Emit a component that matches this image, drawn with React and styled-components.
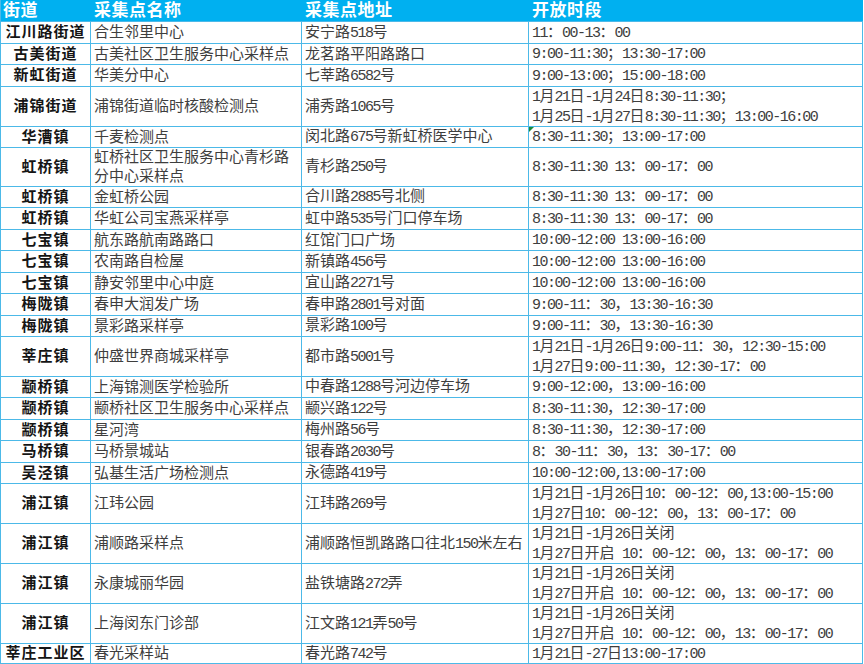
import React from "react";
import styled, { createGlobalStyle } from "styled-components";

const GlobalStyle = createGlobalStyle`
  html, body { margin: 0; padding: 0; background: #ffffff; }
  body { font-family: "Liberation Serif", "Noto Sans CJK SC", serif; }
`;

const LINE = "#4cb9e8";
const COLS = "90px 211px 227px 334px";

const Sheet = styled.div`
  display: flex;
  flex-direction: column;
  width: 863px;
  border-left: 1px solid ${LINE};
  box-sizing: border-box;
`;

const HeaderRow = styled.div`
  display: grid;
  grid-template-columns: ${COLS};
  height: 22px;
  background: #00b0f0;
  border-bottom: 1px solid ${LINE};
  box-sizing: border-box;
`;

const HeaderCell = styled.div`
  display: flex;
  align-items: center;
  padding-left: ${(p) => (p.$first ? "2px" : "3px")};
  color: #ffffff;
  font-size: 17px;
  font-weight: 700;
  letter-spacing: 0.5px;
  line-height: 20px;
  white-space: nowrap;
`;

const Row = styled.div`
  display: grid;
  grid-template-columns: ${COLS};
  height: ${(p) => p.$h}px;
`;

const Cell = styled.div`
  position: relative;
  box-sizing: border-box;
  display: flex;
  flex-direction: column;
  justify-content: center;
  align-items: ${(p) => (p.$district ? "center" : "flex-start")};
  padding-left: ${(p) => (p.$district ? "0" : "3px")};
  border-right: 1px solid ${LINE};
  border-bottom: 1px solid ${LINE};
  font-size: 15px;
  line-height: 19px;
  white-space: nowrap;
  overflow: hidden;
  color: ${(p) => (p.$district ? "#151515" : "#3e3e3e")};
  font-weight: ${(p) => (p.$district ? 700 : 400)};
  letter-spacing: ${(p) => (p.$district ? "1px" : "0")};
`;

const Latin = styled.span`
  font-family: "Liberation Mono", monospace;
  font-size: 15px;
  letter-spacing: -1.5px;
`;

const Flag = styled.span`
  position: absolute;
  top: 0;
  left: 0;
  width: 0;
  height: 0;
  border-top: 5px solid #1a8a3a;
  border-right: 5px solid transparent;
`;

const rows = [
  { h: 22, d: "江川路街道", n: ["合生邻里中心"], a: ["安宁路518号"], t: ["11：00-13：00"] },
  { h: 21, d: "古美街道", n: ["古美社区卫生服务中心采样点"], a: ["龙茗路平阳路路口"], t: ["9:00-11:30；13:30-17:00"] },
  { h: 22, d: "新虹街道", n: ["华美分中心"], a: ["七莘路6582号"], t: ["9:00-13:00；15:00-18:00"] },
  {
    h: 40, d: "浦锦街道", n: ["浦锦街道临时核酸检测点"], a: ["浦秀路1065号"],
    t: ["1月21日-1月24日8:30-11:30；", "1月25日-1月27日8:30-11:30；13:00-16:00"],
  },
  { h: 21, d: "华漕镇", n: ["千麦检测点"], a: ["闵北路675号新虹桥医学中心"], t: ["8:30-11:30；13:00-17:00"], flag: true },
  { h: 39, d: "虹桥镇", n: ["虹桥社区卫生服务中心青杉路", "分中心采样点"], a: ["青杉路250号"], t: ["8:30-11:30 13：00-17：00"] },
  { h: 21, d: "虹桥镇", n: ["金虹桥公园"], a: ["合川路2885号北侧"], t: ["8:30-11:30 13：00-17：00"] },
  { h: 22, d: "虹桥镇", n: ["华虹公司宝燕采样亭"], a: ["虹中路535号门口停车场"], t: ["8:30-11:30 13：00-17：00"] },
  { h: 21, d: "七宝镇", n: ["航东路航南路路口"], a: ["红馆门口广场"], t: ["10:00-12:00 13:00-16:00"] },
  { h: 22, d: "七宝镇", n: ["农南路自检屋"], a: ["新镇路456号"], t: ["10:00-12:00 13:00-16:00"] },
  { h: 21, d: "七宝镇", n: ["静安邻里中心中庭"], a: ["宜山路2271号"], t: ["10:00-12:00 13:00-16:00"] },
  { h: 22, d: "梅陇镇", n: ["春申大润发广场"], a: ["春申路2801号对面"], t: ["9:00-11：30，13:30-16:30"] },
  { h: 21, d: "梅陇镇", n: ["景彩路采样亭"], a: ["景彩路100号"], t: ["9:00-11：30，13:30-16:30"] },
  {
    h: 40, d: "莘庄镇", n: ["仲盛世界商城采样亭"], a: ["都市路5001号"],
    t: ["1月21日-1月26日9:00-11：30，12:30-15:00", "1月27日9:00-11:30，12:30-17：00"],
  },
  { h: 21, d: "颛桥镇", n: ["上海锦测医学检验所"], a: ["中春路1288号河边停车场"], t: ["9:00-12:00，13:00-16:00"] },
  { h: 22, d: "颛桥镇", n: ["颛桥社区卫生服务中心采样点"], a: ["颛兴路122号"], t: ["8:30-11:30，12:30-17:00"] },
  { h: 21, d: "颛桥镇", n: ["星河湾"], a: ["梅州路56号"], t: ["8:30-11:30，12:30-17:00"] },
  { h: 22, d: "马桥镇", n: ["马桥景城站"], a: ["银春路2030号"], t: ["8：30-11：30，13：30-17：00"] },
  { h: 21, d: "吴泾镇", n: ["弘基生活广场检测点"], a: ["永德路419号"], t: ["10:00-12:00,13:00-17:00"] },
  {
    h: 40, d: "浦江镇", n: ["江玮公园"], a: ["江玮路269号"],
    t: ["1月21日-1月26日10：00-12：00,13:00-15:00", "1月27日10：00-12：00，13：00-17：00"],
  },
  {
    h: 40, d: "浦江镇", n: ["浦顺路采样点"], a: ["浦顺路恒凯路路口往北150米左右"],
    t: ["1月21日-1月26日关闭", "1月27日开启 10：00-12：00，13：00-17：00"],
  },
  {
    h: 40, d: "浦江镇", n: ["永康城丽华园"], a: ["盐铁塘路272弄"],
    t: ["1月21日-1月26日关闭", "1月27日开启 10：00-12：00，13：00-17：00"],
  },
  {
    h: 40, d: "浦江镇", n: ["上海闵东门诊部"], a: ["江文路121弄50号"],
    t: ["1月21日-1月26日关闭", "1月27日开启 10：00-12：00，13：00-17：00"],
  },
  { h: 20, d: "莘庄工业区", n: ["春光采样站"], a: ["春光路742号"], t: ["1月21日-27日13:00-17:00"] },
];

const Mixed = ({ text }) => {
  const parts = text.match(/[\x20-\x7e]+|[^\x20-\x7e]+/g) || [];
  return parts.map((p, i) =>
    /^[\x20-\x7e]+$/.test(p) ? <Latin key={i}>{p}</Latin> : <React.Fragment key={i}>{p}</React.Fragment>
  );
};

const Lines = ({ lines }) =>
  lines.map((l, i) => (
    <span key={i}>
      <Mixed text={l} />
    </span>
  ));

export default function App() {
  return (
    <>
      <GlobalStyle />
      <Sheet>
        <HeaderRow>
          <HeaderCell $first>街道</HeaderCell>
          <HeaderCell>采集点名称</HeaderCell>
          <HeaderCell>采集点地址</HeaderCell>
          <HeaderCell>开放时段</HeaderCell>
        </HeaderRow>
        {rows.map((r, i) => (
          <Row key={i} $h={r.h}>
            <Cell $district>{r.d}</Cell>
            <Cell><Lines lines={r.n} /></Cell>
            <Cell><Lines lines={r.a} /></Cell>
            <Cell>
              {r.flag && <Flag />}
              <Lines lines={r.t} />
            </Cell>
          </Row>
        ))}
      </Sheet>
    </>
  );
}
